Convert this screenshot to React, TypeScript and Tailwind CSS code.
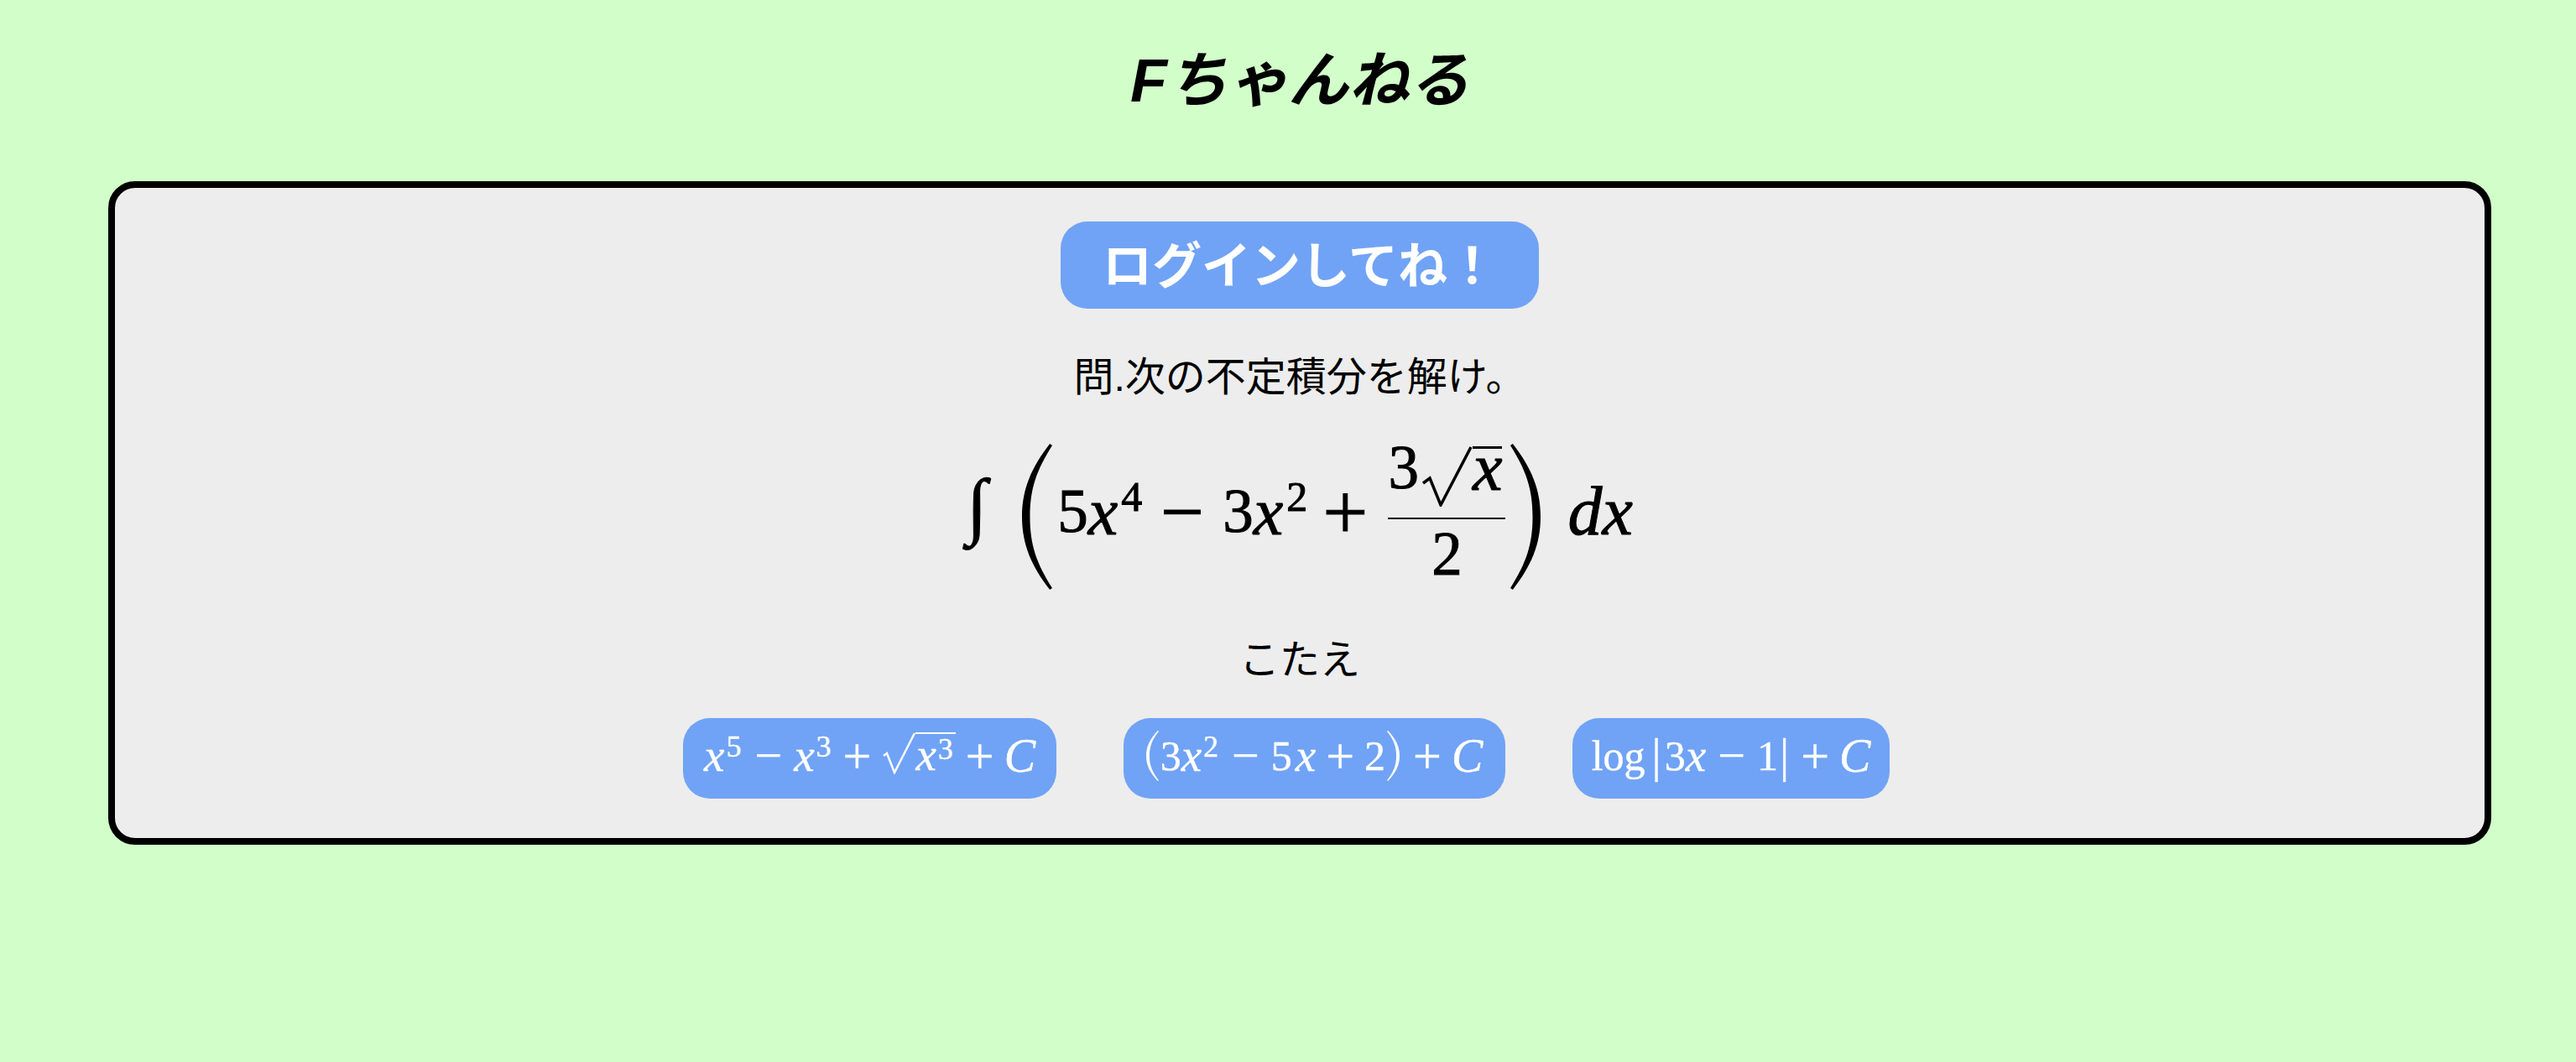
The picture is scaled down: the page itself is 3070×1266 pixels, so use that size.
import React from 'react';

const jp = { fontFamily: '"Liberation Sans", "Noto Sans CJK JP", sans-serif' };
const math = { fontFamily: '"Liberation Serif", "Noto Serif", serif' };

// stretchy delimiter, same outline for both sizes
function Paren({ right, className }: { right?: boolean; className: string }) {
    return (
        <svg viewBox="0 0 38 174" preserveAspectRatio="none" className={`${className} ${right ? '-scale-x-100' : ''}`} fill="currentColor">
            <path d="M35 0 C12 28 0 54 0 87 C0 120 12 146 35 174 L38 172 C18 142 10 120 10 87 C10 54 18 32 38 2 Z" />
        </svg>
    );
}

function Sup({ children, className = '' }: { children: React.ReactNode; className?: string }) {
    return <span className={`inline-block ${className}`}>{children}</span>;
}

const smallMath = 'flex items-center whitespace-nowrap pb-[6px] text-[50px] leading-[60px] [-webkit-text-stroke:0.4px_white]';

function AnswerOne() {
    return (
        <span className={smallMath} style={math}>
            <i className="text-[55px]">x</i>
            <Sup className="ml-[2px] -mt-[22px] text-[36px] leading-[36px]">5</Sup>
            <span className="ml-[16px] text-[58px] leading-[60px]">−</span>
            <i className="ml-[14px] text-[55px]">x</i>
            <Sup className="ml-[2px] -mt-[22px] text-[36px] leading-[36px]">3</Sup>
            <span className="ml-[14px] text-[60px] leading-[60px]">+</span>
            <span className="-mt-[4px] ml-[14px] flex">
                <svg viewBox="0 0 39 50" className="h-[50px] w-[39px] text-white" fill="none" stroke="currentColor">
                    <path d="M1 28 L5 25 L14 48 L38 1" strokeWidth="2.5" />
                </svg>
                <span className="flex border-t-2 border-white pr-[3px]">
                    <i className="text-[55px] leading-[50px]">x</i>
                    <Sup className="ml-[2px] text-[36px] leading-[36px]">3</Sup>
                </span>
            </span>
            <span className="ml-[12px] text-[60px] leading-[60px]">+</span>
            <i className="ml-[12px] text-[56px]">C</i>
        </span>
    );
}

function AnswerTwo() {
    return (
        <span className={smallMath} style={math}>
            <Paren className="h-[60px] w-[15px] text-white" />
            <span className="ml-[2px]">3</span>
            <i className="text-[55px]">x</i>
            <Sup className="ml-[2px] -mt-[22px] text-[36px] leading-[36px]">2</Sup>
            <span className="ml-[16px] text-[58px] leading-[60px]">−</span>
            <span className="ml-[14px]">5</span>
            <i className="ml-[4px] text-[55px]">x</i>
            <span className="ml-[12px] text-[60px] leading-[60px]">+</span>
            <span className="ml-[12px]">2</span>
            <Paren right className="ml-[2px] h-[60px] w-[15px] text-white" />
            <span className="ml-[16px] text-[60px] leading-[60px]">+</span>
            <i className="ml-[12px] text-[56px]">C</i>
        </span>
    );
}

function AnswerThree() {
    return (
        <span className={smallMath} style={math}>
            <span>log</span>
            <span className="ml-[8px] text-[56px]">|</span>
            <span className="ml-[4px]">3</span>
            <i className="text-[55px]">x</i>
            <span className="ml-[14px] text-[58px] leading-[60px]">−</span>
            <span className="ml-[14px]">1</span>
            <span className="ml-[2px] text-[56px]">|</span>
            <span className="ml-[14px] text-[60px] leading-[60px]">+</span>
            <i className="ml-[12px] text-[56px]">C</i>
        </span>
    );
}

function Formula() {
    return (
        <div className="mt-[40px] flex h-[180px] items-center whitespace-nowrap text-black [-webkit-text-stroke:1px_black]" style={math}>
            <i className="-mt-[26px] text-[88px] leading-[100px]">∫</i>
            <Paren className="ml-[42px] h-[174px] w-[36px]" />
            <span className="-mt-[12px] ml-[6px] flex items-center text-[73px] leading-[90px]">
                <span>5</span>
                <i className="text-[80px]">x</i>
                <Sup className="ml-[4px] -mt-[36px] text-[50px] leading-[50px]">4</Sup>
                <span className="ml-[22px] text-[92px] leading-[90px]">−</span>
                <span className="ml-[22px]">3</span>
                <i className="text-[80px]">x</i>
                <Sup className="ml-[4px] -mt-[36px] text-[50px] leading-[50px]">2</Sup>
                <span className="ml-[18px] text-[96px] leading-[90px]">+</span>
            </span>
            <span className="ml-[24px] flex w-[140px] flex-col items-center">
                <span className="flex h-[108px] w-full items-end border-b-2 border-black text-[73px] leading-[72px]">
                    <span className="pb-[23px]">3</span>
                    <span className="ml-[4px] flex pb-[13px]">
                        <svg viewBox="0 0 60 72" className="h-[72px] w-[60px]" fill="none" stroke="currentColor">
                            <path d="M1 44 L9 38 L22 70 L58 1" strokeWidth="3.5" />
                        </svg>
                        <i className="h-[72px] border-t-[3px] border-black text-[80px] leading-[45px]">x</i>
                    </span>
                </span>
                <span className="h-[102px] pt-[6px] text-[73px] leading-[72px]">2</span>
            </span>
            <Paren right className="ml-[6px] h-[174px] w-[36px]" />
            <i className="-mt-[12px] ml-[32px] text-[82px] leading-[90px]">dx</i>
        </div>
    );
}

export default function App() {
    return (
        <div className="min-h-[1266px] bg-[#d1fec9] pl-[129px] pr-[101px] text-black" style={jp}>
            <h1 className="pt-[56px] pb-[80px] text-center text-[72px] font-bold italic leading-[80px]">Fちゃんねる</h1>

            <div className="flex flex-col items-center rounded-[32px] border-8 border-black bg-[#ededed] pt-10 pb-[47px]">
                <button className="h-[104px] w-[570px] rounded-[32px] bg-[#70a3f5] pt-1 text-center text-[59px] font-bold text-white">
                    ログインしてね！
                </button>

                <p className="mt-[46px] text-[48px] leading-[72px]">問.次の不定積分を解け。</p>

                <Formula />

                <p className="mt-[45px] text-[48px] leading-[72px]">こたえ</p>

                <div className="mt-[33px] flex gap-20 pr-8 text-white">
                    <button className="flex h-24 w-[445px] items-center justify-center rounded-[32px] bg-[#70a3f5]">
                        <AnswerOne />
                    </button>
                    <button className="flex h-24 w-[455px] items-center justify-center rounded-[32px] bg-[#70a3f5]">
                        <AnswerTwo />
                    </button>
                    <button className="flex h-24 w-[378px] items-center justify-center rounded-[32px] bg-[#70a3f5]">
                        <AnswerThree />
                    </button>
                </div>
            </div>
        </div>
    );
}
